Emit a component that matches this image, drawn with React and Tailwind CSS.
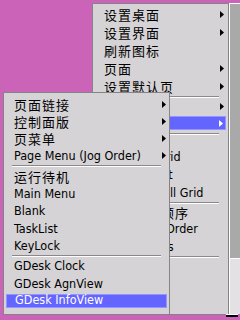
const LATIN = "font-[family-name:'DejaVu_Sans_Condensed',_'DejaVu_Sans',_sans-serif] text-[12.5px]"
const CJK = "font-[family-name:'Noto_Sans_CJK_SC',_sans-serif] text-[13px] tracking-[1px]"

function Arrow({ white }) {
  return (
    <svg width="4" height="7" viewBox="0 0 4 7" className="shrink-0">
      <polygon points="0,0 4,3.5 0,7" fill={white ? '#ffffff' : '#000000'} />
    </svg>
  )
}

function Sep({ h, inset }) {
  return (
    <div className={`flex flex-col justify-center ${h} ${inset}`}>
      <div className="border-t border-b border-t-[#8a888a] border-b-white" />
    </div>
  )
}

function Row({ label, cjk, h, arrow, pl, pr, active, textTop }) {
  const font = cjk ? CJK : LATIN
  if (active) {
    return (
      <div className={`${h} flex flex-col justify-center px-[2px]`}>
        <div className={`h-[14px] bg-[#6464ff] border border-[#9494ff] flex ${textTop ? 'items-start' : 'items-center'} justify-between ${pl} ${pr}`}>
          <span className={`${font} ${textTop ? 'leading-[10px]' : 'leading-[12px]'} text-white whitespace-nowrap`}>{label}</span>
          {arrow && <Arrow white />}
        </div>
      </div>
    )
  }
  return (
    <div className={`${h} flex items-center justify-between ${pl} ${pr}`}>
      <span className={`${font} leading-[13px] text-black whitespace-nowrap`}>{label}</span>
      {arrow && <Arrow />}
    </div>
  )
}

export default function App() {
  const back = [
    { label: '设置桌面', cjk: true, h: 'h-[18px]', arrow: true },
    { label: '设置界面', cjk: true, h: 'h-[18px]', arrow: true },
    { label: '刷新图标', cjk: true, h: 'h-[18px]' },
    { label: '页面', cjk: true, h: 'h-[18px]', arrow: true },
    { label: '设置默认页', cjk: true, h: 'h-[18px]', arrow: true },
    { sep: 'h-[3px]' },
    { label: '显示方式', cjk: true, h: 'h-[16px]', arrow: true },
    { label: '排列方式', cjk: true, h: 'h-[18px]', arrow: true, active: true },
    { sep: 'h-[3px]' },
    { spacer: 'h-[12px]' },
    { label: 'Grid', h: 'h-[18px]', pl: 'pl-[64px]' },
    { label: 'List', h: 'h-[18px]', pl: 'pl-[60px]' },
    { label: 'Small Grid', h: 'h-[18px]', pl: 'pl-[52px]' },
    { sep: 'h-[3px]' },
    { label: '按名称顺序', cjk: true, h: 'h-[16px]', pl: 'pl-[26px]' },
    { label: 'Jog Order', h: 'h-[17px]', pl: 'pl-[52px]' },
    { label: 'Tabs', h: 'h-[18px]', pl: 'pl-[56px]' },
    { sep: 'h-[4px]' },
  ]

  const front = [
    { label: '页面链接', cjk: true, h: 'h-[17px]', arrow: true },
    { label: '控制面版', cjk: true, h: 'h-[17px]', arrow: true },
    { label: '页菜单', cjk: true, h: 'h-[17px]', arrow: true },
    { label: 'Page Menu (Jog Order)', h: 'h-[17px]', arrow: true },
    { sep: 'h-[4px]' },
    { label: '运行待机', cjk: true, h: 'h-[17px]' },
    { label: 'Main Menu', h: 'h-[17px]' },
    { label: 'Blank', h: 'h-[17px]' },
    { label: 'TaskList', h: 'h-[18px]' },
    { label: 'KeyLock', h: 'h-[17px]' },
    { sep: 'h-[3px]' },
    { label: 'GDesk Clock', h: 'h-[17px]' },
    { label: 'GDesk AgnView', h: 'h-[18px]' },
    { label: 'GDesk InfoView', h: 'h-[18px]', active: true },
  ]

  return (
    <div className="relative w-[240px] h-[320px] overflow-hidden bg-[#cb64b9]">
      {/* window behind, right edge */}
      <div className="absolute left-[229px] top-[3px] w-[11px] h-[311px] flex flex-col border-l border-t border-white">
        <div className="flex-1 bg-[#a9a9a9]" />
        <div className="h-[56px] border-t border-white bg-[#e3e1e3]" />
      </div>

      {/* back menu */}
      <div className="absolute left-[92px] top-[3px] w-[137px] h-[312px] border border-[#858385] bg-[#d5d3d5] pt-[1px]">
        {back.map((r, i) =>
          r.sep ? (
            <Sep key={i} h={r.sep} inset="ml-[11px] mr-[9px]" />
          ) : r.spacer ? (
            <div key={i} className={r.spacer} />
          ) : (
            <Row key={i} {...r} pl={r.pl || (r.active ? 'pl-[9px]' : 'pl-[11px]')} pr={r.active ? 'pr-[2px]' : 'pr-[4px]'} />
          )
        )}
      </div>

      {/* front menu */}
      <div className="absolute left-[3px] top-[92px] w-[167px] h-[223px] border border-[#858385] bg-[#d5d3d5] pt-[3px]">
        {front.map((r, i) =>
          r.sep ? (
            <Sep key={i} h={r.sep} inset="mx-[8px]" />
          ) : (
            <Row key={i} {...r} textTop={r.active} pl={r.active ? 'pl-[8px]' : 'pl-[10px]'} pr="pr-[3px]" />
          )
        )}
      </div>

      {/* bit of the taskbar at the bottom right */}
      <div className="absolute left-[226px] top-[314px] w-[12px] h-[3px] border-t border-white bg-black" />
    </div>
  )
}
